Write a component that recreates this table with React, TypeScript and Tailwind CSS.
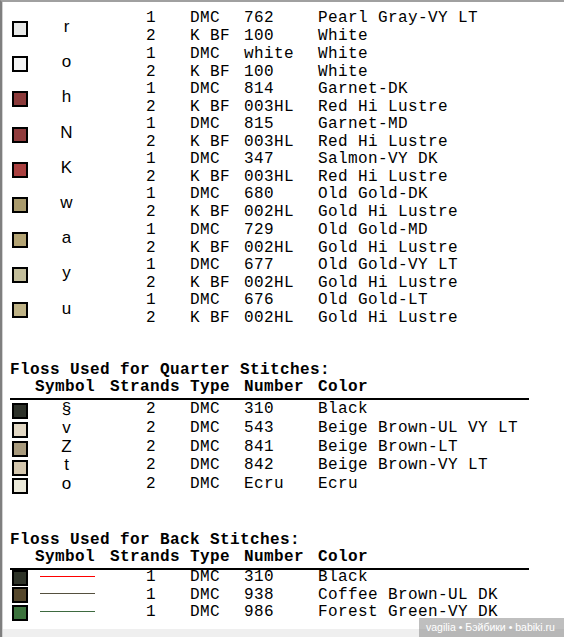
type Floss = { strands: string; type: string; number: string; color: string };

type FullRow = { swatch: string; symbol: string; lines: Floss[] };
type PartRow = { swatch: string; symbol: string; floss: Floss };
type BackRow = { swatch: string; stroke: string; floss: Floss };

const fullStitches: FullRow[] = [
  {
    swatch: "bg-[#e8e9e8]",
    symbol: "r",
    lines: [
      { strands: "1", type: "DMC", number: "762", color: "Pearl Gray-VY LT" },
      { strands: "2", type: "K BF", number: "100", color: "White" },
    ],
  },
  {
    swatch: "bg-[#f4f4f4]",
    symbol: "o",
    lines: [
      { strands: "1", type: "DMC", number: "white", color: "White" },
      { strands: "2", type: "K BF", number: "100", color: "White" },
    ],
  },
  {
    swatch: "bg-[#8b3a3a]",
    symbol: "h",
    lines: [
      { strands: "1", type: "DMC", number: "814", color: "Garnet-DK" },
      { strands: "2", type: "K BF", number: "003HL", color: "Red Hi Lustre" },
    ],
  },
  {
    swatch: "bg-[#903c3d]",
    symbol: "N",
    lines: [
      { strands: "1", type: "DMC", number: "815", color: "Garnet-MD" },
      { strands: "2", type: "K BF", number: "003HL", color: "Red Hi Lustre" },
    ],
  },
  {
    swatch: "bg-[#a9403f]",
    symbol: "K",
    lines: [
      { strands: "1", type: "DMC", number: "347", color: "Salmon-VY DK" },
      { strands: "2", type: "K BF", number: "003HL", color: "Red Hi Lustre" },
    ],
  },
  {
    swatch: "bg-[#a99a6c]",
    symbol: "w",
    lines: [
      { strands: "1", type: "DMC", number: "680", color: "Old Gold-DK" },
      { strands: "2", type: "K BF", number: "002HL", color: "Gold Hi Lustre" },
    ],
  },
  {
    swatch: "bg-[#b4a474]",
    symbol: "a",
    lines: [
      { strands: "1", type: "DMC", number: "729", color: "Old Gold-MD" },
      { strands: "2", type: "K BF", number: "002HL", color: "Gold Hi Lustre" },
    ],
  },
  {
    swatch: "bg-[#c2bd9a]",
    symbol: "y",
    lines: [
      { strands: "1", type: "DMC", number: "677", color: "Old Gold-VY LT" },
      { strands: "2", type: "K BF", number: "002HL", color: "Gold Hi Lustre" },
    ],
  },
  {
    swatch: "bg-[#beb285]",
    symbol: "u",
    lines: [
      { strands: "1", type: "DMC", number: "676", color: "Old Gold-LT" },
      { strands: "2", type: "K BF", number: "002HL", color: "Gold Hi Lustre" },
    ],
  },
];

const quarterStitches: PartRow[] = [
  { swatch: "bg-[#2d3129]", symbol: "§", floss: { strands: "2", type: "DMC", number: "310", color: "Black" } },
  { swatch: "bg-[#e2d8c4]", symbol: "v", floss: { strands: "2", type: "DMC", number: "543", color: "Beige Brown-UL VY LT" } },
  { swatch: "bg-[#a89a7d]", symbol: "Z", floss: { strands: "2", type: "DMC", number: "841", color: "Beige Brown-LT" } },
  { swatch: "bg-[#d4c7ae]", symbol: "t", floss: { strands: "2", type: "DMC", number: "842", color: "Beige Brown-VY LT" } },
  { swatch: "bg-[#ebe9d9]", symbol: "o", floss: { strands: "2", type: "DMC", number: "Ecru", color: "Ecru" } },
];

const backStitches: BackRow[] = [
  { swatch: "bg-[#2e3328]", stroke: "#ff0000", floss: { strands: "1", type: "DMC", number: "310", color: "Black" } },
  { swatch: "bg-[#55472b]", stroke: "#55503f", floss: { strands: "1", type: "DMC", number: "938", color: "Coffee Brown-UL DK" } },
  { swatch: "bg-[#3c733d]", stroke: "#3e6a40", floss: { strands: "1", type: "DMC", number: "986", color: "Forest Green-VY DK" } },
];

const symbolFont = "font-['Liberation_Sans',Arial,sans-serif] text-[17px] leading-[16px]";

function Swatch({ color, className }: { color: string; className: string }) {
  return <div className={`size-4 border-2 border-black ${color} ${className}`} />;
}

function FlossLine({ floss, className = "" }: { floss: Floss; className?: string }) {
  return (
    <div className={`flex h-[18px] leading-[18px] whitespace-pre ${className}`}>
      <span className="w-[80px] shrink-0 pl-[36px]">{floss.strands}</span>
      <span className="w-[54px] shrink-0">{floss.type}</span>
      <span className="w-[74px] shrink-0">{floss.number}</span>
      <span>{floss.color}</span>
    </div>
  );
}

function SectionHead({ title, className }: { title: string; className: string }) {
  return (
    <div className={`font-bold leading-[17px] whitespace-pre ${className}`}>
      <div>{title}</div>
      <div className="flex h-[21px] w-[519px] border-b-2 border-black">
        <span className="w-[25px] shrink-0" />
        <span className="w-[75px] shrink-0">Symbol</span>
        <span className="w-[80px] shrink-0">Strands</span>
        <span className="w-[54px] shrink-0">Type</span>
        <span className="w-[74px] shrink-0">Number</span>
        <span>Color</span>
      </div>
    </div>
  );
}

export default function App() {
  return (
    <div className="relative h-[637px] w-[564px] overflow-hidden border-t-2 border-l-2 border-t-[#a0a0a0] border-l-[#7f7f7f] bg-white text-black">
      <div className="flex h-full flex-col border-l border-[#d2d2d2]">
        <div className="flex-1 pl-[7px] pt-[7.4px] font-['Liberation_Mono','Courier_New',monospace] text-[16px] tracking-[0.4px]">
          {/* full stitches */}
          {fullStitches.map((row) => (
            <div key={row.symbol + row.lines[0].number} className="flex h-[35.2px] items-start">
              <div className="w-[25px] shrink-0">
                <Swatch color={row.swatch} className="ml-[2px] mt-[11.6px]" />
              </div>
              <div className="w-[75px] shrink-0">
                <div className={`mt-[9.7px] w-[63px] text-center tracking-normal ${symbolFont}`}>{row.symbol}</div>
              </div>
              <div className="flex flex-col">
                {row.lines.map((f, i) => (
                  <FlossLine key={i} floss={f} />
                ))}
              </div>
            </div>
          ))}

          <SectionHead title="Floss Used for Quarter Stitches:" className="mt-[36px]" />
          {quarterStitches.map((row) => (
            <div key={row.floss.number} className="flex h-[18.75px] items-start">
              <div className="w-[25px] shrink-0">
                <Swatch color={row.swatch} className="ml-[2px] mt-[3.3px]" />
              </div>
              <div className="w-[75px] shrink-0">
                <div className={`mt-[1.1px] w-[63px] text-center tracking-normal ${symbolFont}`}>{row.symbol}</div>
              </div>
              <FlossLine floss={row.floss} />
            </div>
          ))}

          <SectionHead title="Floss Used for Back Stitches:" className="mt-[37.8px]" />
          {backStitches.map((row) => (
            <div key={row.floss.number} className="flex h-[17.5px] items-start">
              <div className="w-[25px] shrink-0">
                <Swatch color={row.swatch} className="ml-[2px]" />
              </div>
              <div className="w-[75px] shrink-0">
                <svg width="60" height="12" className="ml-[5px] block">
                  <line x1="0" y1="6" x2="55" y2="6" stroke={row.stroke} strokeWidth="1" shapeRendering="crispEdges" />
                </svg>
              </div>
              <FlossLine floss={row.floss} className="-mt-[1.5px]" />
            </div>
          ))}
        </div>
        <div className="h-[8px] bg-[#efefef]" />
      </div>

      <div className="absolute right-0 bottom-0 flex h-[19px] w-[145px] items-center bg-[rgba(128,128,128,0.5)] pl-[7px] font-['Liberation_Sans',Arial,sans-serif] text-[10.5px] text-white">
        vagilia • Бэйбики • babiki.ru
      </div>
    </div>
  );
}
